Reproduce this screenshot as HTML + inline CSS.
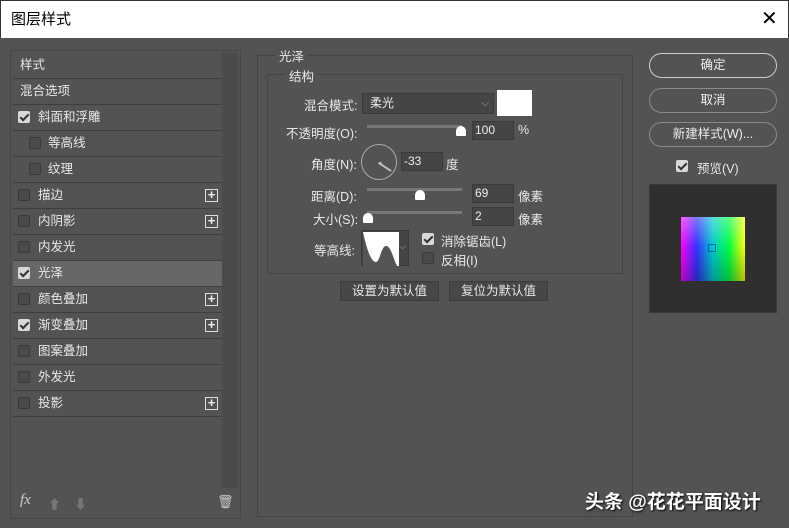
<!DOCTYPE html><html><head><meta charset="utf-8"><style>
*{box-sizing:border-box;margin:0;padding:0}
body{width:789px;height:528px;background:#535353;position:relative;overflow:hidden;font-family:"Liberation Sans","Noto Sans CJK SC",sans-serif;font-size:12.5px;color:#e8e8e8}
.a{position:absolute}
.title{left:0;top:0;width:789px;height:38px;background:#fff;color:#000;font-size:15px;line-height:38px;padding-left:10px;border-top:1px solid #333;border-left:1px solid #333;border-right:1px solid #333}
.row{position:absolute;left:13px;width:209px;height:26px;border-bottom:1px solid #3e3e3e;line-height:25px}
.cb{position:absolute;width:12px;height:12px;border:1px solid #3a3a3a;background:#4a4a4a;border-radius:2px}
.cb.on{background:#d8d8d8;border-color:#d8d8d8}
.cb.on:after{content:"";position:absolute;left:3px;top:0px;width:3px;height:7px;border:solid #333;border-width:0 2px 2px 0;transform:rotate(45deg)}
.plus{position:absolute;left:192px;top:6px;width:13px;height:13px;border:1px solid #ddd;color:#eee;font-size:13px;line-height:10px;text-align:center;font-weight:bold}
.inp{position:absolute;height:19px;background:#454545;border:1px solid #3a3a3a;color:#eee;font-size:12px;line-height:17px;padding-left:2px}
.btn{position:absolute;left:649px;width:128px;height:25px;border:1px solid #8a8a8a;border-radius:13px;text-align:center;line-height:23px;color:#eee}
.sl{position:absolute;left:367px;width:95px;height:3px;background:#777}
.th{position:absolute;width:10px;height:10px;background:#fff;border-radius:5px 5px 1px 1px}
.b2{position:absolute;height:20px;background:#474747;border:1px solid #3c3c3c;line-height:18px;text-align:center}
</style></head><body>
<div class="a title">图层样式</div>
<div class="a" style="left:761px;top:6px;font-size:20px;color:#000">✕</div>
<div class="a" style="left:10px;top:50px;width:231px;height:469px;border:1px solid #474747"></div>
<div class="a" style="left:222px;top:53px;width:16px;height:435px;background:#4b4b4b"></div>
<div class="row" style="top:53px;padding-left:7px">样式</div>
<div class="row" style="top:79px;padding-left:7px">混合选项</div>
<div class="row" style="top:105px"><div class="cb on" style="left:5px;top:6px"></div><span style="margin-left:25px">斜面和浮雕</span></div>
<div class="row" style="top:131px"><div class="cb" style="left:16px;top:6px"></div><span style="margin-left:35px">等高线</span></div>
<div class="row" style="top:157px"><div class="cb" style="left:16px;top:6px"></div><span style="margin-left:35px">纹理</span></div>
<div class="row" style="top:183px"><div class="cb" style="left:5px;top:6px"></div><span style="margin-left:25px">描边</span><div class="plus">+</div></div>
<div class="row" style="top:209px"><div class="cb" style="left:5px;top:6px"></div><span style="margin-left:25px">内阴影</span><div class="plus">+</div></div>
<div class="row" style="top:235px"><div class="cb" style="left:5px;top:6px"></div><span style="margin-left:25px">内发光</span></div>
<div class="row" style="top:261px;background:#676767"><div class="cb on" style="left:5px;top:6px"></div><span style="margin-left:25px">光泽</span></div>
<div class="row" style="top:287px"><div class="cb" style="left:5px;top:6px"></div><span style="margin-left:25px">颜色叠加</span><div class="plus">+</div></div>
<div class="row" style="top:313px"><div class="cb on" style="left:5px;top:6px"></div><span style="margin-left:25px">渐变叠加</span><div class="plus">+</div></div>
<div class="row" style="top:339px"><div class="cb" style="left:5px;top:6px"></div><span style="margin-left:25px">图案叠加</span></div>
<div class="row" style="top:365px"><div class="cb" style="left:5px;top:6px"></div><span style="margin-left:25px">外发光</span></div>
<div class="row" style="top:391px"><div class="cb" style="left:5px;top:6px"></div><span style="margin-left:25px">投影</span><div class="plus">+</div></div>
<div class="a" style="left:20px;top:492px;font-style:italic;font-family:'Liberation Serif',serif;font-size:15px;color:#ccc">fx</div>
<div class="a" style="left:48px;top:494px;color:#777;font-size:13px">⬆</div>
<div class="a" style="left:74px;top:494px;color:#777;font-size:13px">⬇</div>
<div class="a" style="left:217px;top:494px;color:#ccc;font-size:13px">🗑</div>

<div class="a" style="left:257px;top:55px;width:376px;height:462px;border:1px solid #444"></div>
<div class="a" style="left:275px;top:46px;background:#535353;padding:0 4px">光泽</div>
<div class="a" style="left:267px;top:74px;width:356px;height:200px;border:1px solid #444"></div>
<div class="a" style="left:285px;top:66px;background:#535353;padding:0 4px">结构</div>
<div class="a" style="left:304px;top:95px">混合模式:</div>
<div class="inp" style="left:362px;top:93px;width:132px;height:21px;line-height:19px;padding-left:7px">柔光<span style="position:absolute;right:4px;color:#aaa;font-size:10px">⌵</span></div>
<div class="a" style="left:497px;top:90px;width:35px;height:26px;background:#fff"></div>
<div class="a" style="left:286px;top:123px">不透明度(O):</div>
<div class="sl" style="top:125px"></div><div class="th" style="left:456px;top:126px"></div>
<div class="inp" style="left:472px;top:121px;width:42px">100</div><div class="a" style="left:518px;top:123px">%</div>
<div class="a" style="left:311px;top:154px">角度(N):</div>
<div class="a" style="left:361px;top:144px;width:36px;height:36px;border:1px solid #aaa;border-radius:50%"></div>
<div class="a" style="left:379px;top:162px;width:3px;height:3px;background:#bbb;border-radius:50%"></div>
<div class="a" style="left:379px;top:162px;width:15px;height:1.5px;background:#bbb;transform-origin:0 0;transform:rotate(33deg)"></div>
<div class="inp" style="left:401px;top:152px;width:42px">-33</div><div class="a" style="left:446px;top:154px">度</div>
<div class="a" style="left:311px;top:186px">距离(D):</div>
<div class="sl" style="top:188px"></div><div class="th" style="left:415px;top:190px"></div>
<div class="inp" style="left:472px;top:184px;width:42px">69</div><div class="a" style="left:518px;top:186px">像素</div>
<div class="a" style="left:313px;top:209px">大小(S):</div>
<div class="sl" style="top:211px"></div><div class="th" style="left:363px;top:213px"></div>
<div class="inp" style="left:472px;top:207px;width:42px">2</div><div class="a" style="left:518px;top:209px">像素</div>
<div class="a" style="left:314px;top:240px">等高线:</div>
<div class="a" style="left:361px;top:230px;width:48px;height:36px;background:#444;border:1px solid #3a3a3a">
<svg width="36" height="34" style="position:absolute;left:1px;top:1px"><rect width="36" height="34" fill="#fff"/><path d="M0 0 C4 18 8 30 13 30 C17 30 18 14 23 14 C28 14 30 26 34 34 L0 34 Z" fill="#555"/></svg>
<span style="position:absolute;right:2px;top:10px;font-size:9px;color:#aaa">⌵</span></div>
<div class="cb on" style="left:422px;top:233px"></div><div class="a" style="left:441px;top:231px">消除锯齿(L)</div>
<div class="cb" style="left:422px;top:252px"></div><div class="a" style="left:441px;top:250px">反相(I)</div>
<div class="b2" style="left:340px;top:281px;width:99px">设置为默认值</div>
<div class="b2" style="left:449px;top:281px;width:99px">复位为默认值</div>

<div class="btn" style="top:53px;border-color:#ccc">确定</div>
<div class="btn" style="top:88px">取消</div>
<div class="btn" style="top:122px">新建样式(W)...</div>
<div class="cb on" style="left:676px;top:160px"></div><div class="a" style="left:697px;top:158px">预览(V)</div>
<div class="a" style="left:649px;top:184px;width:128px;height:129px;background:#2f2f2f;border:1px solid #3a3a3a"></div>
<div class="a" style="left:681px;top:217px;width:64px;height:64px;background:linear-gradient(90deg,#f0f 0%,#33f 25%,#0cc 50%,#0f4 75%,#ff0 100%)"></div>
<div class="a" style="left:681px;top:217px;width:64px;height:64px;background:linear-gradient(180deg,rgba(255,255,255,.35),rgba(0,0,0,0) 45%,rgba(0,0,0,.25))"></div>
<div class="a" style="left:708px;top:244px;width:8px;height:8px;border:1px solid #06a"></div>
<div class="a" style="left:585px;top:487px;font-size:19px;font-weight:bold;color:#fff;text-shadow:1px 1px 2px #000">头条 @花花平面设计</div>
</body></html>
